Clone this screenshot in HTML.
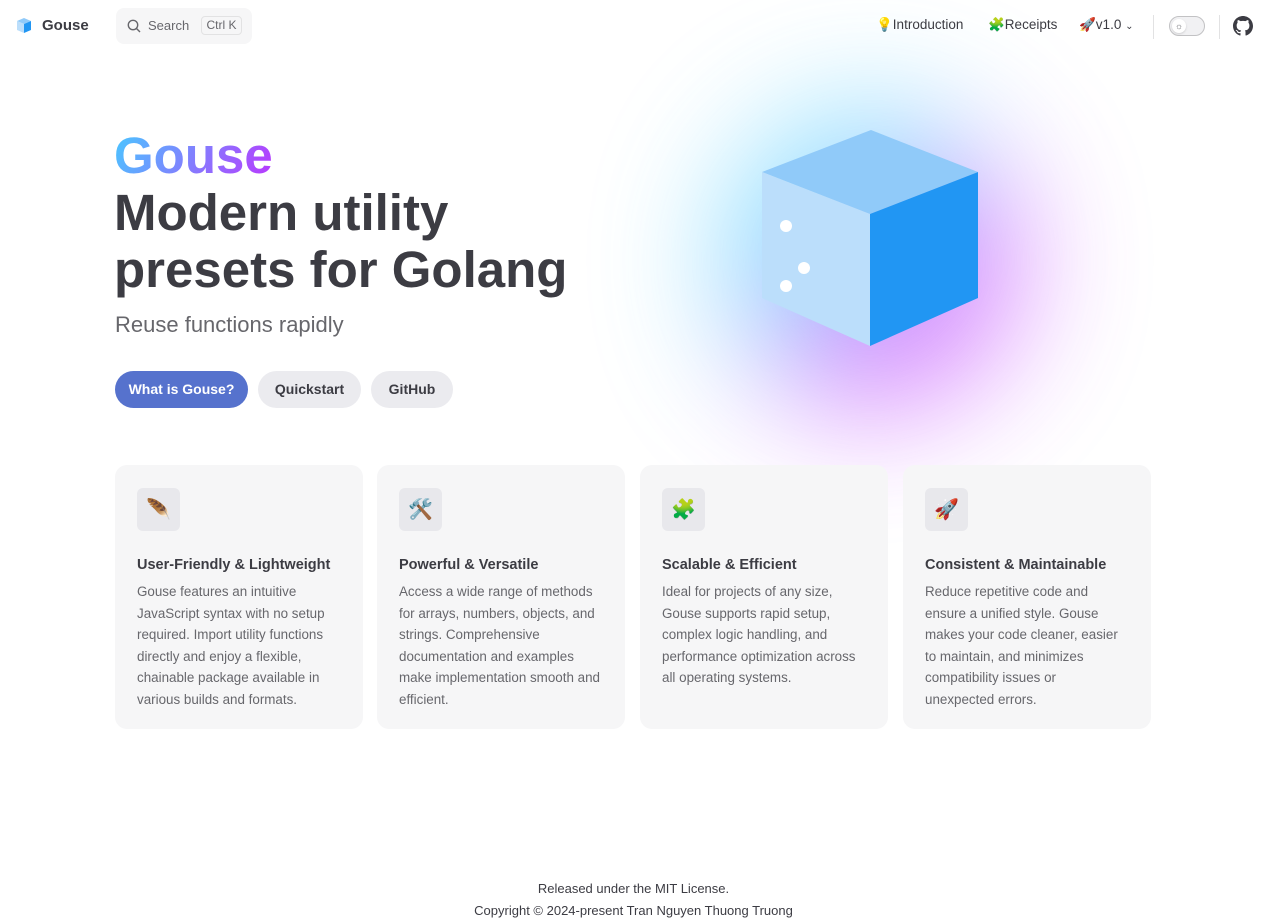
<!DOCTYPE html>
<html><head><meta charset="utf-8"><style>
*{box-sizing:border-box;margin:0;padding:0}
body{width:1267px;height:921px;background:#fff;font-family:"Liberation Sans",sans-serif;color:#3c3c43;position:relative;overflow:hidden}
.abs{position:absolute}
.glow{position:absolute;left:720px;top:110px;width:300px;height:300px;border-radius:50%;background:linear-gradient(-45deg,#bd34fe 50%,#47caff 50%);filter:blur(64px);opacity:.6}
.btn{position:absolute;top:371px;height:37px;border-radius:20px;font-size:14px;font-weight:bold;line-height:37px;text-align:center}
.card{position:absolute;top:465px;width:248px;height:264px;background:#f6f6f7;border-radius:12px;padding:23px 22px}
.ic{width:43px;height:43px;background:#e8e8ec;border-radius:6px;display:flex;align-items:center;justify-content:center;font-size:20px}
.card h3{font-size:14.5px;font-weight:bold;margin-top:22px;color:#3c3c43;line-height:24px}
.card p{font-size:13.4px;line-height:21.6px;color:#67676c;margin-top:4px}
</style></head><body>
<div class="glow"></div>
<svg class="abs" style="left:0;top:0" width="1267" height="500">
<polygon points="871,130 978,172 870,214 762,172" fill="#90caf9"/>
<polygon points="762,172 870,214 870,346 762,298" fill="#bbdefb"/>
<polygon points="870,214 978,172 978,298 870,346" fill="#2196f3"/>
<circle cx="786" cy="226" r="6" fill="#fff"/><circle cx="804" cy="268" r="6" fill="#fff"/><circle cx="786" cy="286" r="6" fill="#fff"/>
<g transform="translate(17,18)"><polygon points="7,0 14,3 7,6 0,3" fill="#90caf9"/><polygon points="0,3 7,6 7,15 0,12" fill="#bbdefb"/><polygon points="7,6 14,3 14,12 7,15" fill="#2196f3"/></g>
</svg>
<div class="abs" style="left:42px;top:17px;font-size:15px;font-weight:bold;">Gouse</div>
<div class="abs" style="left:116px;top:8px;width:136px;height:36px;background:#f6f6f7;border-radius:8px"></div>
<svg class="abs" style="left:127px;top:19px" width="14" height="14" viewBox="0 0 14 14"><circle cx="6" cy="6" r="4.7" fill="none" stroke="#67676c" stroke-width="1.4"/><line x1="9.5" y1="9.5" x2="13" y2="13" stroke="#67676c" stroke-width="1.4"/></svg>
<div class="abs" style="left:148px;top:18px;font-size:13px;color:#67676c">Search</div>
<div class="abs" style="left:201px;top:16px;width:41px;height:19px;border:1px solid #e2e2e3;border-radius:4px;font-size:12px;color:#67676c;text-align:center;line-height:17px">Ctrl K</div>
<div class="abs" style="left:876px;top:17px;font-size:13.5px;">💡Introduction</div>
<div class="abs" style="left:988px;top:17px;font-size:13.5px;">🧩Receipts</div>
<div class="abs" style="left:1079px;top:17px;font-size:13.5px;">🚀v1.0 <span style="font-size:10px">⌄</span></div>
<div class="abs" style="left:1153px;top:15px;width:1px;height:24px;background:#e2e2e3"></div>
<div class="abs" style="left:1169px;top:16px;width:36px;height:20px;border:1px solid #c2c2c4;border-radius:10px;background:#f1f1f3"><div style="position:absolute;left:2px;top:2px;width:14px;height:14px;border-radius:50%;background:#fff;box-shadow:0 1px 2px rgba(0,0,0,.15);font-size:9px;line-height:14px;text-align:center;color:#67676c">☼</div></div>
<div class="abs" style="left:1219px;top:15px;width:1px;height:24px;background:#e2e2e3"></div>
<svg class="abs" style="left:1233px;top:16px" width="20" height="20" viewBox="0 0 16 16"><path fill="#3c3c43" d="M8 0C3.58 0 0 3.58 0 8c0 3.54 2.29 6.53 5.470 7.59.4.07.55-.17.55-.38 0-.19-.01-.82-.01-1.49-2.01.37-2.530-.49-2.69-.94-.09-.23-.48-.94-.82-1.130-.28-.15-.68-.52-.01-.53.63-.01 1.08.58 1.23.82.72 1.21 1.870.87 2.33.66.07-.52.28-.87.51-1.070-1.78-.2-3.64-.89-3.64-3.95 0-.87.31-1.590.82-2.150-.08-.2-.36-1.02.08-2.12 0 0 .67-.21 2.2.82.64-.18 1.32-.27 2-.27.68 0 1.36.09 2 .27 1.53-1.04 2.2-.82 2.2-.82.44 1.1.16 1.92.08 2.12.51.56.82 1.27.82 2.15 0 3.07-1.87 3.75-3.65 3.95.29.25.54.73.54 1.48 0 1.07-.01 1.93-.01 2.2 0 .21.15.46.55.38A8.013 8.013 0 0016 8c0-4.42-3.58-8-8-8z"/></svg>

<div class="abs" style="left:114px;top:126px;font-size:51px;font-weight:bold;line-height:60px;background:linear-gradient(120deg,#47caff 0%,#bd34fe 100%);-webkit-background-clip:text;color:transparent">Gouse</div>
<div class="abs" style="left:114px;top:184px;font-size:51px;font-weight:bold;line-height:57px;color:#3c3c43">Modern utility<br>presets for Golang</div>
<div class="abs" style="left:115px;top:312px;font-size:22px;color:#67676c">Reuse functions rapidly</div>
<div class="btn" style="left:115px;width:133px;background:#5672cd;color:#fff">What is Gouse?</div>
<div class="btn" style="left:258px;width:103px;background:#ebebef;color:#3c3c43">Quickstart</div>
<div class="btn" style="left:371px;width:82px;background:#ebebef;color:#3c3c43">GitHub</div>

<div class="card" style="left:115px"><div class="ic">🪶</div><h3>User-Friendly &amp; Lightweight</h3><p>Gouse features an intuitive JavaScript syntax with no setup required. Import utility functions directly and enjoy a flexible, chainable package available in various builds and formats.</p></div>
<div class="card" style="left:377px"><div class="ic">🛠️</div><h3>Powerful &amp; Versatile</h3><p>Access a wide range of methods for arrays, numbers, objects, and strings. Comprehensive documentation and examples make implementation smooth and efficient.</p></div>
<div class="card" style="left:640px"><div class="ic">🧩</div><h3>Scalable &amp; Efficient</h3><p>Ideal for projects of any size, Gouse supports rapid setup, complex logic handling, and performance optimization across all operating systems.</p></div>
<div class="card" style="left:903px"><div class="ic">🚀</div><h3>Consistent &amp; Maintainable</h3><p>Reduce repetitive code and<br>ensure a unified style. Gouse makes your code cleaner, easier to maintain, and minimizes compatibility issues or<br>unexpected errors.</p></div>

<div class="abs" style="left:0;width:1267px;top:878px;text-align:center;font-size:13px;line-height:22px;color:#3c3c43">Released under the MIT License.<br>Copyright © 2024-present Tran Nguyen Thuong Truong</div>
</body></html>
